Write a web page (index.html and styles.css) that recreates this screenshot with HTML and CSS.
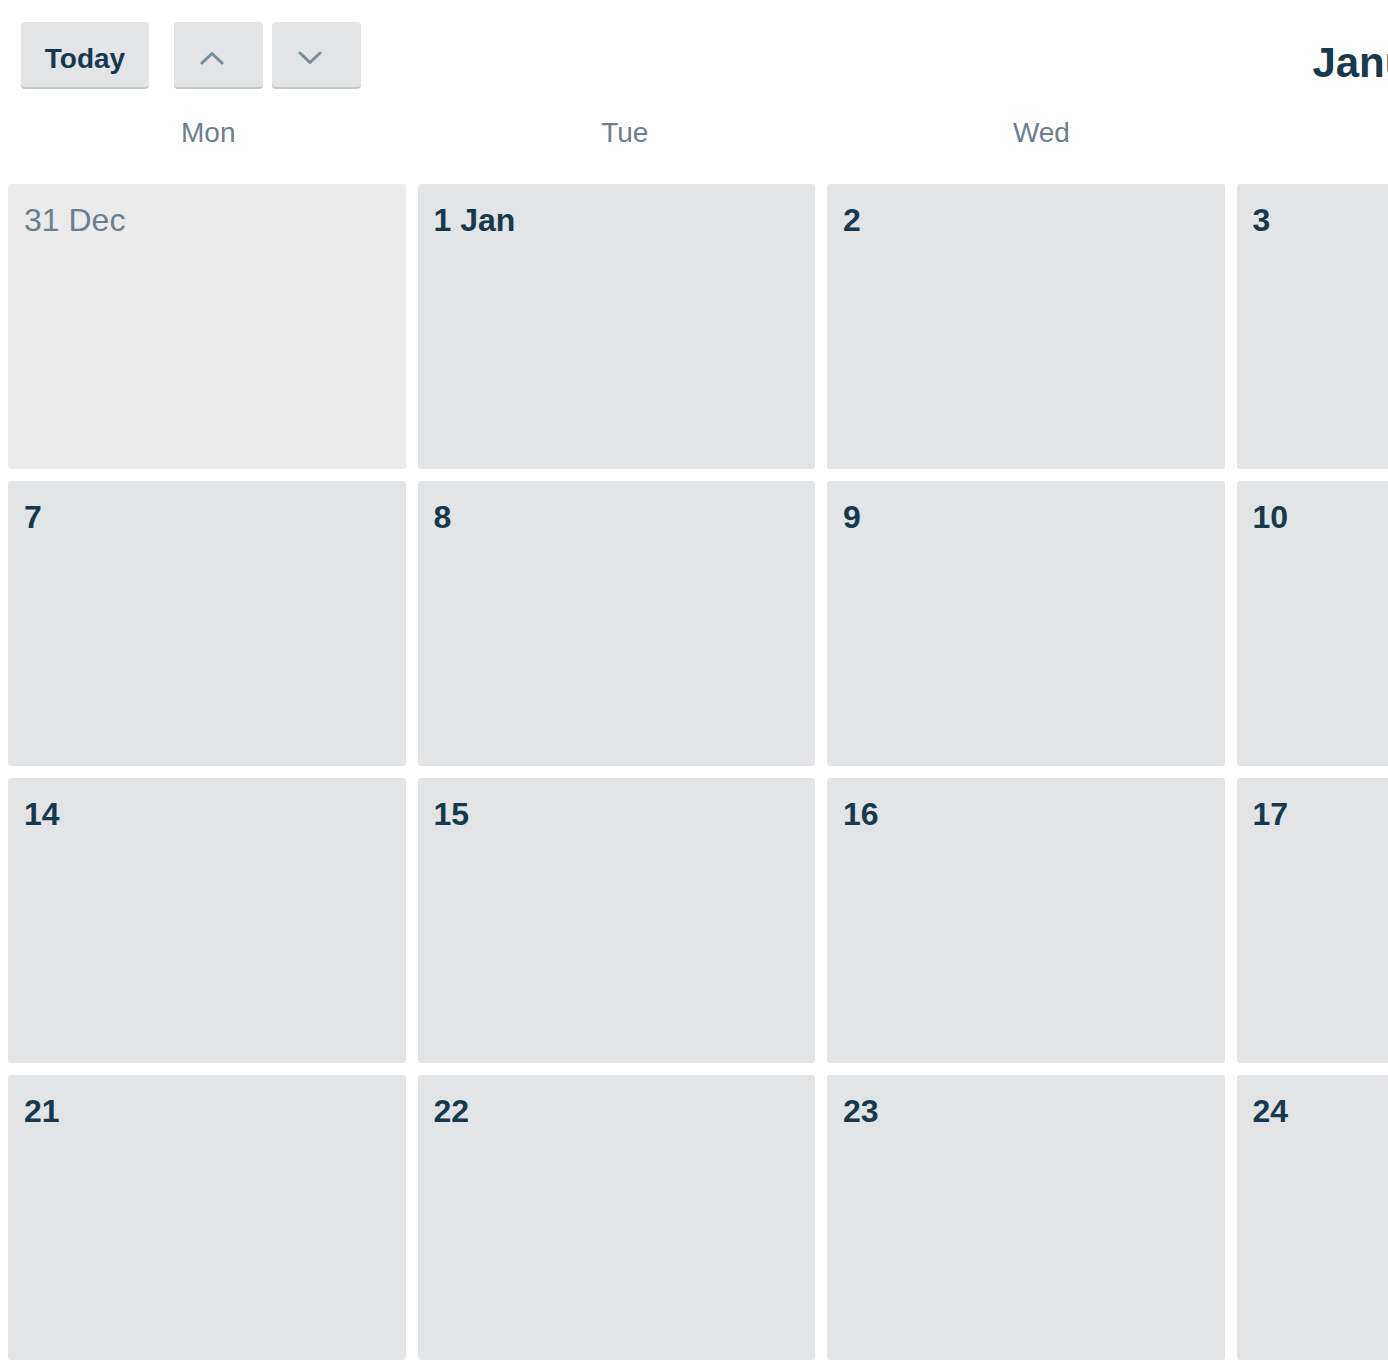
FILE: index.html
```html
<!DOCTYPE html>
<html lang="en">
<head>
    <meta charset="UTF-8">
    <title>Calendar</title>
    <link rel="stylesheet" href="styles.css">
</head>
<body>
    <div class="calendar">
        <div class="toolbar">
            <div class="toolbar-left">
                <button class="btn btn-today">Today</button>
                <div class="nav-buttons">
                    <button class="btn btn-icon" aria-label="Previous">
                        <svg viewBox="0 0 24 14" width="24" height="14" fill="none" stroke="currentColor" stroke-width="3" stroke-linecap="round" stroke-linejoin="round"><polyline points="2,12 12,2.5 22,12"></polyline></svg>
                    </button>
                    <button class="btn btn-icon" aria-label="Next">
                        <svg viewBox="0 0 24 14" width="24" height="14" fill="none" stroke="currentColor" stroke-width="3" stroke-linecap="round" stroke-linejoin="round"><polyline points="2,2 12,11.5 22,2"></polyline></svg>
                    </button>
                </div>
            </div>
            <h1 class="title">January 2019</h1>
            <div class="toolbar-right"></div>
        </div>

        <div class="weekdays">
            <div>Mon</div>
            <div>Tue</div>
            <div>Wed</div>
            <div>Thu</div>
            <div>Fri</div>
            <div>Sat</div>
            <div>Sun</div>
        </div>

        <div class="days">
            <div class="day other-month"><span class="date">31 Dec</span></div>
            <div class="day"><span class="date">1 Jan</span></div>
            <div class="day"><span class="date">2</span></div>
            <div class="day"><span class="date">3</span></div>
            <div class="day"><span class="date">4</span></div>
            <div class="day"><span class="date">5</span></div>
            <div class="day"><span class="date">6</span></div>

            <div class="day"><span class="date">7</span></div>
            <div class="day"><span class="date">8</span></div>
            <div class="day"><span class="date">9</span></div>
            <div class="day"><span class="date">10</span></div>
            <div class="day"><span class="date">11</span></div>
            <div class="day"><span class="date">12</span></div>
            <div class="day"><span class="date">13</span></div>

            <div class="day"><span class="date">14</span></div>
            <div class="day"><span class="date">15</span></div>
            <div class="day"><span class="date">16</span></div>
            <div class="day"><span class="date">17</span></div>
            <div class="day"><span class="date">18</span></div>
            <div class="day"><span class="date">19</span></div>
            <div class="day"><span class="date">20</span></div>

            <div class="day"><span class="date">21</span></div>
            <div class="day"><span class="date">22</span></div>
            <div class="day"><span class="date">23</span></div>
            <div class="day"><span class="date">24</span></div>
            <div class="day"><span class="date">25</span></div>
            <div class="day"><span class="date">26</span></div>
            <div class="day"><span class="date">27</span></div>

            <div class="day"><span class="date">28</span></div>
            <div class="day"><span class="date">29</span></div>
            <div class="day"><span class="date">30</span></div>
            <div class="day"><span class="date">31</span></div>
            <div class="day other-month"><span class="date">1 Feb</span></div>
            <div class="day other-month"><span class="date">2</span></div>
            <div class="day other-month"><span class="date">3</span></div>
        </div>
    </div>
</body>
</html>
```

FILE: styles.css
```css
body {
    margin: 0;
    font-family: "Liberation Sans", Arial, sans-serif;
    background-color: #fff;
    color: #17394d;
}
.calendar {
    width: 2916px;
}
/* Top bar: buttons on the left, month centred over the whole grid */
.toolbar {
    display: grid;
    grid-template-columns: 1fr auto 1fr;
    align-items: start;
    padding: 22px 0 0 21px;
    height: 67px;
}
.toolbar-left {
    display: flex;
    gap: 25px;
}
.nav-buttons {
    display: flex;
    gap: 9px;
}
.btn {
    height: 65px;
    border: none;
    border-radius: 4px;
    background-color: #e2e4e6;
    box-shadow: 0 2px 0 #c4c9cc;
    font-family: inherit;
    cursor: pointer;
    display: flex;
    align-items: center;
    justify-content: center;
    padding: 0;
}
.btn-today {
    width: 128px;
    padding-top: 9px;
    font-size: 28px;
    font-weight: bold;
    color: #17394d;
}
.btn-icon {
    width: 89px;
    padding: 6px 14px 0 0;
    color: #798d99;
}
.title {
    margin: 17px 46px 0 0;
    font-size: 42px;
    line-height: 48px;
    font-weight: bold;
    color: #17394d;
}
.weekdays {
    display: grid;
    grid-template-columns: repeat(7, 1fr);
    margin-top: 28px;
    padding-bottom: 35px;
    font-size: 28px;
    line-height: 32px;
    color: #6b808c;
    text-align: center;
}
.days {
    display: grid;
    grid-template-columns: repeat(7, 397.5px);
    grid-auto-rows: 285px;
    column-gap: 12px;
    row-gap: 12px;
    padding-left: 8px;
}
.day {
    background-color: #e2e4e6;
    border-radius: 3px;
    padding: 18px 16px;
}
.date {
    font-size: 32px;
    line-height: 36px;
    font-weight: bold;
    color: #17394d;
}
.other-month {
    background-color: #ebebeb;
}
.other-month .date {
    font-weight: normal;
    color: #6b808c;
}
```
